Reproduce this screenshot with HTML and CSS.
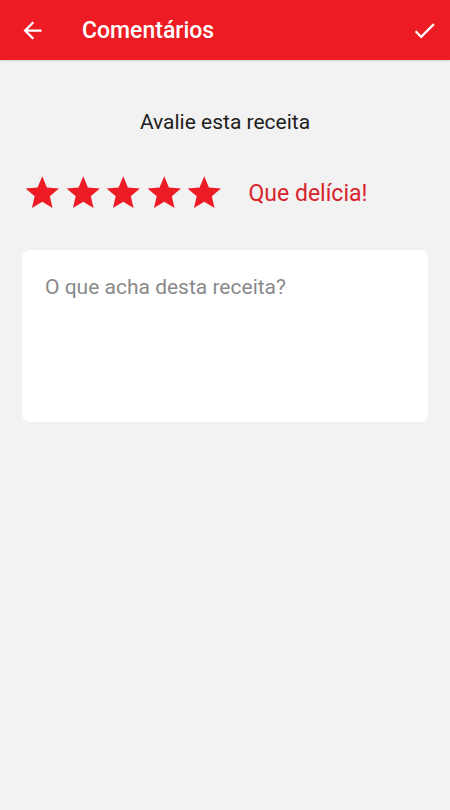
FILE: index.html
```html
<!DOCTYPE html>
<html lang="pt">
<head>
    <meta charset="UTF-8">
    <meta name="viewport" content="width=device-width, initial-scale=1.0">
    <title>Comentários</title>
    <link rel="stylesheet" href="styles.css">
</head>
<body>
<div class="screen">
    <!-- Toolbar -->
    <header class="toolbar">
        <button class="icon-btn back">
            <svg width="27" height="27" viewBox="0 0 24 24"><path fill="#fff" d="M20 11H7.83l5.59-5.59L12 4l-8 8 8 8 1.41-1.41L7.83 13H20v-2z"/></svg>
        </button>
        <h1 class="title">Comentários</h1>
        <button class="icon-btn done">
            <svg width="27" height="27" viewBox="0 0 24 24"><path fill="#fff" d="M9 16.17L4.83 12l-1.42 1.41L9 19 21 7l-1.41-1.41z"/></svg>
        </button>
    </header>

    <!-- Rating -->
    <p class="prompt">Avalie esta receita</p>
    <div class="rating">
        <div class="stars">
            <svg class="star" viewBox="0 0 24 24"><path d="M12 17.27L18.18 21l-1.64-7.03L22 9.24l-7.19-.61L12 2 9.19 8.63 2 9.24l5.46 4.73L5.82 21z"/></svg>
            <svg class="star" viewBox="0 0 24 24"><path d="M12 17.27L18.18 21l-1.64-7.03L22 9.24l-7.19-.61L12 2 9.19 8.63 2 9.24l5.46 4.73L5.82 21z"/></svg>
            <svg class="star" viewBox="0 0 24 24"><path d="M12 17.27L18.18 21l-1.64-7.03L22 9.24l-7.19-.61L12 2 9.19 8.63 2 9.24l5.46 4.73L5.82 21z"/></svg>
            <svg class="star" viewBox="0 0 24 24"><path d="M12 17.27L18.18 21l-1.64-7.03L22 9.24l-7.19-.61L12 2 9.19 8.63 2 9.24l5.46 4.73L5.82 21z"/></svg>
            <svg class="star" viewBox="0 0 24 24"><path d="M12 17.27L18.18 21l-1.64-7.03L22 9.24l-7.19-.61L12 2 9.19 8.63 2 9.24l5.46 4.73L5.82 21z"/></svg>
        </div>
        <span class="rating-label">Que delícia!</span>
    </div>

    <!-- Comment box -->
    <div class="comment-box">
        <textarea class="comment" placeholder="O que acha desta receita?"></textarea>
    </div>
</div>
</body>
</html>
```
FILE: styles.css
```css
body {
    margin: 0;
    font-family: Roboto, "Noto Sans", Arial, sans-serif;
    background-color: #f2f2f2;
}
.screen {
    width: 450px;
    min-height: 810px;
    display: flex;
    flex-direction: column;
}

.toolbar {
    height: 60px;
    background-color: #ed1c24;
    display: flex;
    align-items: center;
    padding: 0 12px 0 19px;
    box-shadow: 0 1px 2px rgba(0, 0, 0, 0.15);
}
.icon-btn {
    background: none;
    border: none;
    padding: 0;
    width: 27px;
    height: 27px;
    cursor: pointer;
}
.icon-btn svg {
    display: block;
}
.title {
    flex: 1;
    margin: 0 0 0 36px;
    color: #fff;
    font-size: 23px;
    font-weight: 500;
}

.prompt {
    margin: 50px 0 0;
    text-align: center;
    font-size: 21px;
    color: #212121;
}
.rating {
    display: flex;
    align-items: center;
    gap: 24px;
    padding: 0 22px;
    margin-top: 39px;
}
.stars {
    display: flex;
}
.star {
    width: 40.5px;
    height: 40px;
    fill: #ed1c24;
}
.rating-label {
    color: #d9232d;
    font-size: 23px;
}

.comment-box {
    margin: 37px 22px 0;
    height: 172px;
    background-color: #fff;
    border-radius: 8px;
    display: flex;
}
.comment {
    flex: 1;
    border: none;
    outline: none;
    resize: none;
    background: transparent;
    padding: 25px 23px;
    font-family: inherit;
    font-size: 21px;
    color: #212121;
}
.comment::placeholder {
    color: #8a8a8a;
}
```
